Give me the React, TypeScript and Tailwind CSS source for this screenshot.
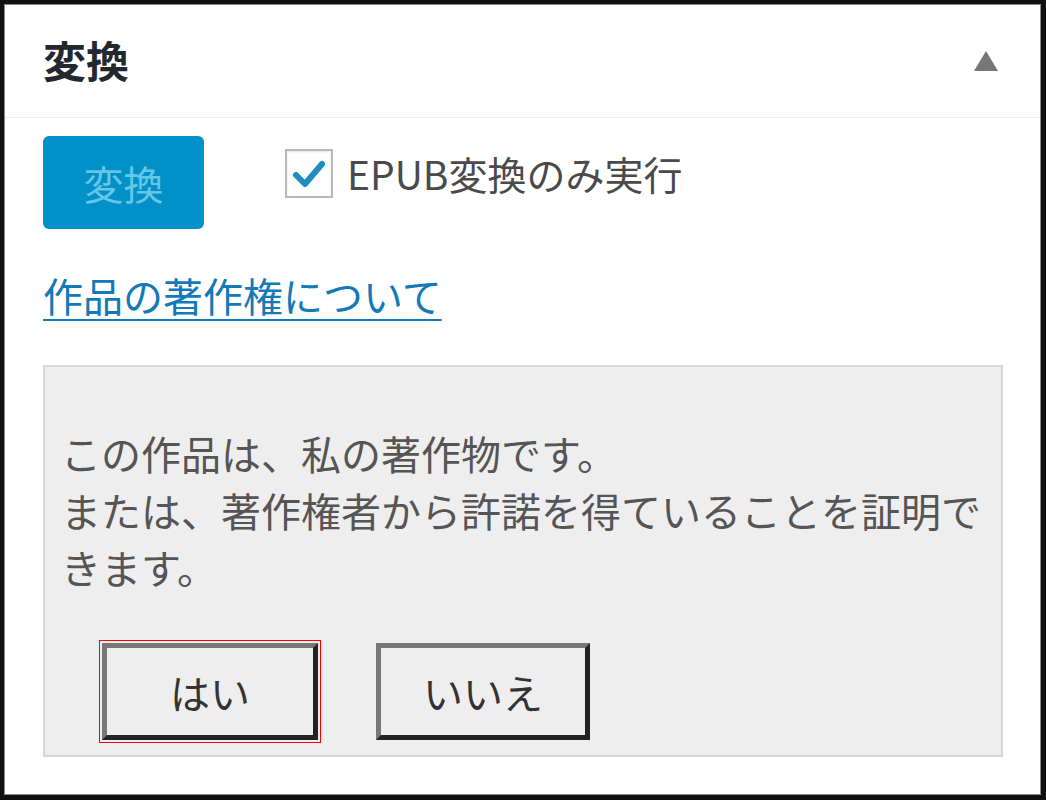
import React from "react";

const jp = { fontFamily: '"Noto Sans CJK JP", "Noto Sans", sans-serif' };

export default function App() {
  return (
    <div className="w-[1046px] h-[800px] bg-[#111] pt-[4px] pl-[4px] pr-[5px] pb-[5px]" style={jp}>
      <div className="h-full bg-white border border-[#8a8a8a] flex flex-col">
        <div className="h-[113px] flex items-center justify-between pl-[38px] pr-[42px] border-b border-[#eeeeee]">
          <h2 className="text-[43px] font-bold text-[#23282d] leading-none -mt-[4px]">変換</h2>
          <svg width="24" height="20" viewBox="0 0 24 20">
            <polygon points="12,0 24,20 0,20" fill="#777" />
          </svg>
        </div>
        <div className="pl-[38px] pr-[37px] flex flex-col">
          <div className="flex items-start mt-[18px]">
            <div className="w-[161px] h-[93px] rounded-[6px] bg-[#0290c8] flex items-center justify-center text-[40px] text-[#66c6e6] leading-none">
              変換
            </div>
            <div className="flex items-center ml-[81px] mt-[13px]">
              <div className="w-[48px] h-[49px] border-2 border-[#b4b9be] bg-white shadow-[inset_0_1px_2px_rgba(0,0,0,0.1)] flex items-center justify-center">
                <svg width="34" height="30" viewBox="0 0 34 30">
                  <polyline points="4,16 13,25 30,5" fill="none" stroke="#1e8cbe" strokeWidth="6" strokeLinecap="round" strokeLinejoin="round" />
                </svg>
              </div>
              <span className="ml-[14px] text-[39px] text-[#4a4a4a] leading-none">EPUB変換のみ実行</span>
            </div>
          </div>
          <a className="mt-[40px] self-start text-[40px] text-[#1379b8] leading-[52px] underline decoration-2 underline-offset-[7px]">
            作品の著作権について
          </a>
          <div className="mt-[44px] h-[392px] bg-[#eeeeee] border-2 border-[#d6d6d6] pl-[16px] pt-[58px] flex flex-col">
            <p className="text-[40px] text-[#555] leading-[57px]">
              この作品は、私の著作物です。
              <br />
              または、著作権者から許諾を得ていることを証明で
              <br />
              きます。
            </p>
            <div className="flex items-start mt-[44px] pl-[38px]">
              <div className="border border-[#ff0000] p-[2px]">
                <button className="block w-[216px] h-[97px] border-[5px] border-t-[#777] border-l-[#777] border-b-[#222] border-r-[#222] bg-[#eeeeee] text-[40px] text-[#333] leading-none">
                  はい
                </button>
              </div>
              <button className="ml-[55px] mt-[3px] w-[214px] h-[97px] border-[5px] border-t-[#777] border-l-[#777] border-b-[#222] border-r-[#222] bg-[#eeeeee] text-[40px] text-[#333] leading-none">
                いいえ
              </button>
            </div>
          </div>
        </div>
      </div>
    </div>
  );
}
